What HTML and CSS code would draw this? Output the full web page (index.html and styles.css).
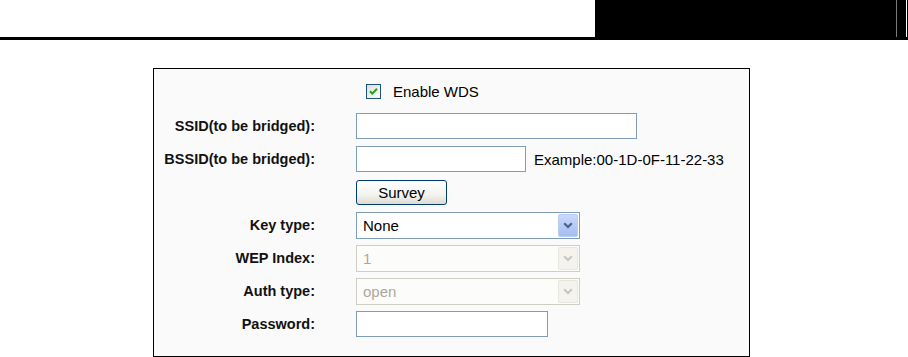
FILE: index.html
```html
<!DOCTYPE html>
<html>
<head>
<meta charset="utf-8">
<link rel="stylesheet" href="styles.css">
</head>
<body>
<div class="topbar">
  <div class="blank"></div>
  <div class="blackbox"><span class="gline"></span><span class="wline"></span></div>
</div>
<div class="panel">
  <div class="enable-row">
    <span class="checkbox">
      <svg width="15" height="15" viewBox="0 0 15 15">
        <defs>
          <linearGradient id="cbg" x1="0" y1="0" x2="1" y2="1">
            <stop offset="0" stop-color="#dcdcd7"/>
            <stop offset="1" stop-color="#ffffff"/>
          </linearGradient>
        </defs>
        <rect x="0.5" y="0.5" width="14" height="14" fill="url(#cbg)" stroke="#1c5180"/>
        <path d="M4 7.2 L6.3 9.6 L11 4.8" fill="none" stroke="#21a121" stroke-width="2"/>
      </svg>
    </span>
    <span class="enable-text">Enable WDS</span>
  </div>
  <div class="form">
    <div class="label">SSID(to be bridged):</div>
    <div class="field"><span class="input w281"></span></div>

    <div class="label">BSSID(to be bridged):</div>
    <div class="field"><span class="input w170"></span><span class="hint">Example:00-1D-0F-11-22-33</span></div>

    <div class="label"></div>
    <div class="field"><span class="button">Survey</span></div>

    <div class="label">Key type:</div>
    <div class="field">
      <span class="select">
        <span class="sel-text">None</span>
        <span class="sel-btn">
          <svg width="10" height="7" viewBox="0 0 10 7"><path d="M1.2 1.2 L5 5 L8.8 1.2" fill="none" stroke="#4d6185" stroke-width="2.2"/></svg>
        </span>
      </span>
    </div>

    <div class="label">WEP Index:</div>
    <div class="field">
      <span class="select disabled">
        <span class="sel-text">1</span>
        <span class="sel-btn">
          <svg width="10" height="7" viewBox="0 0 10 7"><path d="M1.2 1.2 L5 5 L8.8 1.2" fill="none" stroke="#c9c7ba" stroke-width="2"/></svg>
        </span>
      </span>
    </div>

    <div class="label">Auth type:</div>
    <div class="field">
      <span class="select disabled">
        <span class="sel-text">open</span>
        <span class="sel-btn">
          <svg width="10" height="7" viewBox="0 0 10 7"><path d="M1.2 1.2 L5 5 L8.8 1.2" fill="none" stroke="#c9c7ba" stroke-width="2"/></svg>
        </span>
      </span>
    </div>

    <div class="label">Password:</div>
    <div class="field"><span class="input w192"></span></div>
  </div>
</div>
</body>
</html>
```

FILE: styles.css
```css
* { box-sizing: border-box; }
html, body { margin: 0; padding: 0; background: #ffffff; }
body { font-family: "Liberation Sans", Arial, sans-serif; color: #000; }

.topbar {
  display: flex;
  height: 40px;
  border-bottom: 3px solid #000;
}
.blank { flex: 1; }
.blackbox {
  width: 313px;
  background: #000;
  display: flex;
  justify-content: flex-end;
}
.gline { width: 1px; background: #7a7a7a; margin-right: 9px; }
.wline { width: 1px; background: #ffffff; margin-right: 1px; }

.panel {
  margin: 28px 0 0 153px;
  width: 597px;
  height: 289px;
  border: 1px solid #000;
  background: #fafafa;
  padding-top: 9px;
}

.enable-row {
  display: flex;
  align-items: center;
  height: 26px;
  padding-left: 212px;
}
.checkbox { display: flex; width: 15px; height: 15px; }
.enable-text { margin-left: 12px; font-size: 15px; }

.form {
  margin-top: 9px;
  display: grid;
  grid-template-columns: 161px 1fr;
  grid-auto-rows: 26px;
  column-gap: 41px;
  row-gap: 7px;
}
.label {
  font-weight: bold;
  font-size: 14.5px;
  text-align: right;
  align-self: center;
  color: #111;
}
.field { display: flex; align-items: center; }

.input {
  display: block;
  height: 26px;
  border: 1px solid #7f9db9;
  background: #fff;
}
.w281 { width: 281px; }
.w170 { width: 170px; }
.w192 { width: 192px; height: 26px; }
.hint { margin-left: 8px; font-size: 15px; }

.button {
  display: flex;
  align-items: center;
  justify-content: center;
  width: 91px;
  height: 25px;
  border: 1px solid #003c74;
  border-radius: 3px;
  background: linear-gradient(#ffffff, #f3f3ef 60%, #dedbcf);
  font-size: 15px;
}

.select {
  display: flex;
  align-items: stretch;
  width: 224px;
  height: 27px;
  border: 1px solid #7f9db9;
  background: #fff;
  padding: 1px;
}
.sel-text {
  flex: 1;
  display: flex;
  align-items: center;
  padding-left: 5px;
  font-size: 15px;
}
.sel-btn {
  width: 20px;
  display: flex;
  align-items: center;
  justify-content: center;
  border-radius: 2px;
  background: linear-gradient(#c9d8fc, #b3c8f5 60%, #a6bdf2);
  border: 1px solid #b9cdf7;
}
.select.disabled {
  border-color: #d0cec3;
  background: #fcfcfb;
}
.select.disabled .sel-text { color: #aca899; }
.select.disabled .sel-btn {
  background: #f4f3ee;
  border: 1px solid #e8e6dd;
}
```
